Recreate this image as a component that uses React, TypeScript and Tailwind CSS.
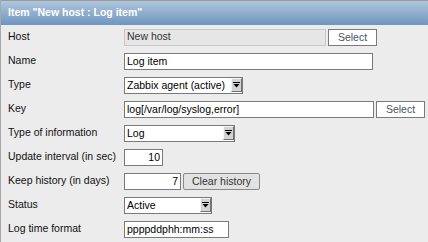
import React from "react";

const font = { fontFamily: '"Liberation Sans", Arial, sans-serif' };

function Arrow() {
  return (
    <span className="flex h-[14px] w-[11px] shrink-0 flex-col items-center justify-center border border-t-[#f4f4f4] border-l-[#f4f4f4] border-r-[#707070] border-b-[#707070] bg-[#d4d4d4]">
      <svg width="7" height="6" viewBox="0 0 7 6">
        <rect x="0" y="0" width="7" height="1" fill="#000" />
        <path d="M0.5 2 L6.5 2 L3.5 5.5 Z" fill="#000" />
      </svg>
    </span>
  );
}

function Select({ value, w }: { value: string; w: string }) {
  return (
    <div className={`flex h-[17px] shrink-0 items-center justify-between border border-[#7a7a7a] bg-white ${w}`}>
      <span className="whitespace-nowrap pl-[2px] text-[10.5px] leading-[14px] text-black">{value}</span>
      <Arrow />
    </div>
  );
}

function Input({ value, w, right }: { value: string; w: string; right?: boolean }) {
  return (
    <div className={`flex h-[17px] shrink-0 items-center border border-[#7a7a7a] bg-white px-[2px] ${w} ${right ? "justify-end" : ""}`}>
      <span className="whitespace-nowrap text-[10.5px] leading-[14px] text-black">{value}</span>
    </div>
  );
}

function Btn({ label, w, gray }: { label: string; w: string; gray?: boolean }) {
  return (
    <div
      className={`flex h-[17px] shrink-0 items-center justify-center whitespace-nowrap border text-[10.5px] leading-[14px] ${w} ${
        gray ? "rounded-[2px] border-[#8a8a8a] bg-[#e2e2e2] text-[#333]" : "border-[#7a7a7a] bg-white text-[#4b5563]"
      }`}
    >
      {label}
    </div>
  );
}

function Row({ label, children }: { label: string; children: React.ReactNode }) {
  return (
    <div className="flex h-[24px] items-center">
      <div className="w-[123px] shrink-0 whitespace-nowrap pl-[7px] text-[10.5px] text-[#111]">{label}</div>
      <div className="flex items-center gap-[2px]">{children}</div>
    </div>
  );
}

export default function App() {
  return (
    <div className="h-[242px] w-[428px] overflow-hidden border-l border-[#a8a8a8] bg-[#ececec]" style={font}>
      <div className="flex h-[25px] items-center whitespace-nowrap border-t border-[#9a9a9a] bg-gradient-to-b from-[#b0c6dd] to-[#6e96be] pl-[7px] text-[10.5px] font-bold text-white">
        Item "New host : Log item"
      </div>
      <Row label="Host">
        <div className="flex h-[17px] w-[202px] shrink-0 items-center border border-[#c8c8c8] bg-[#e6e6e6] px-[2px] text-[10.5px] text-[#333]">
          New host
        </div>
        <Btn label="Select" w="w-[49px]" />
      </Row>
      <Row label="Name">
        <Input value="Log item" w="w-[249px]" />
      </Row>
      <Row label="Type">
        <Select value="Zabbix agent (active)" w="w-[119px]" />
      </Row>
      <Row label="Key">
        <Input value="log[/var/log/syslog,error]" w="w-[250px]" />
        <Btn label="Select" w="w-[49px]" />
      </Row>
      <Row label="Type of information">
        <Select value="Log" w="w-[111px]" />
      </Row>
      <Row label="Update interval (in sec)">
        <Input value="10" w="w-[39px]" right />
      </Row>
      <Row label="Keep history (in days)">
        <Input value="7" w="w-[57px]" right />
        <Btn label="Clear history" w="w-[77px]" gray />
      </Row>
      <Row label="Status">
        <Select value="Active" w="w-[88px]" />
      </Row>
      <Row label="Log time format">
        <Input value="ppppddphh:mm:ss" w="w-[105px]" />
      </Row>
    </div>
  );
}
